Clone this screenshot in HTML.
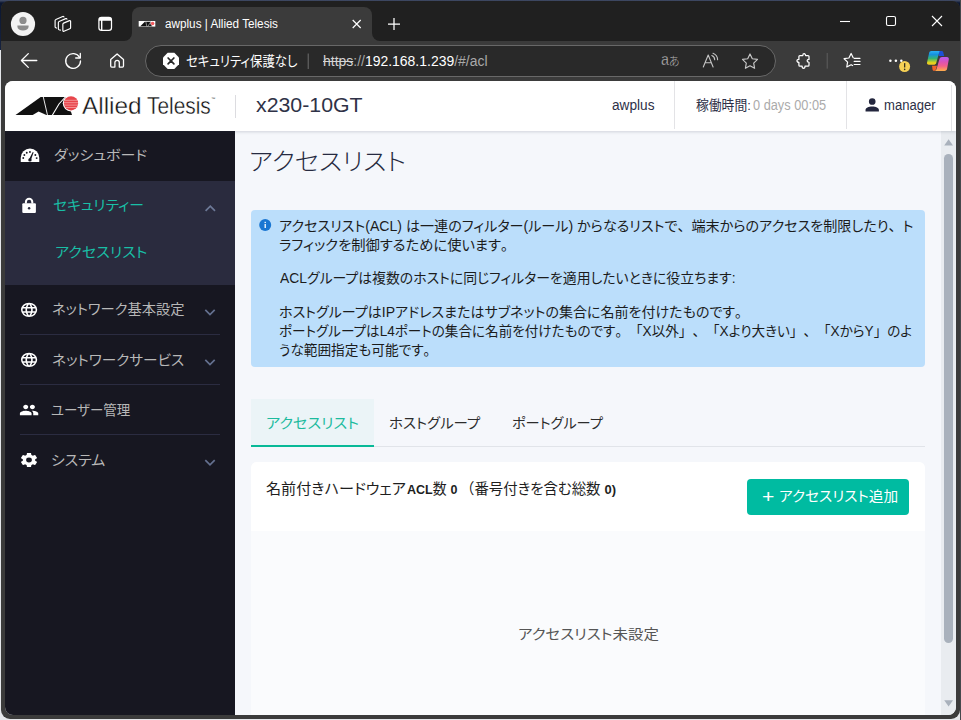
<!DOCTYPE html>
<html lang="ja">
<head>
<meta charset="utf-8">
<title>awplus | Allied Telesis</title>
<style>
*{box-sizing:border-box;margin:0;padding:0}
html,body{width:961px;height:720px;overflow:hidden}
body{background:#e4e6ea;font-family:"Liberation Sans","Noto Sans CJK JP",sans-serif;position:relative}
.abs{position:absolute}
.t{position:absolute;white-space:nowrap;transform-origin:0 50%;line-height:1;font-feature-settings:"palt"}
.fw{font-feature-settings:normal;text-spacing-trim:space-all}
#desk-top{left:0;top:0;width:961px;height:50px;background:linear-gradient(#46506a,#0b1630 3px,#16223e)}
#win{left:1px;top:1px;width:959px;height:717.5px;background:#3b3b3b;border-radius:8px 8px 9px 9px;overflow:hidden}
#titlebar{left:0;top:0;width:959px;height:40px;background:#202020}
#tab{left:131px;top:6px;width:240px;height:34px;background:#3b3b3b;border-radius:8px 8px 0 0}
.flare{width:8px;height:8px;top:32px;background:#3b3b3b}
.flare i{display:block;width:8px;height:8px;background:#202020}
#pill{left:144px;top:44px;width:630.5px;height:32px;border-radius:16px;background:#292929;border:1px solid #686868}
#content{left:4px;top:80px;width:951px;height:634px;border-radius:8px;overflow:hidden;background:#f5f7fb}
#header{left:0;top:0;width:951px;height:50px;background:#fff;box-shadow:0 1px 3px rgba(40,50,70,.18)}
#sidebar{left:0;top:50px;width:230px;height:584px;background:#171721}
#active{left:0;top:100px;width:230px;height:104px;background:#2a2b3e}
.sep{left:15px;width:200px;height:1px;background:#2b2c41}
#main{left:230px;top:50px;width:706px;height:584px}
#scroll{left:936px;top:50px;width:15px;height:584px;background:#e9ecf0}
#thumb{left:3px;top:23px;width:9px;height:489px;border-radius:4.5px;background:#a9b1bc}
#info{left:16px;top:79px;width:674px;height:156.6px;background:#bbdefb;border-radius:4px}
#tabsel{left:16px;top:268px;width:123px;height:47.8px;background:#ebf4f7;border-bottom:2.7px solid #08b997}
#tabline{left:139px;top:314.6px;width:551px;height:1px;background:#e1e4e9}
#card{left:16px;top:331px;width:674px;height:300px;background:#fafbfd;border-radius:6px 6px 0 0;overflow:hidden}
#cardhead{left:0;top:0;width:674px;height:69px;background:#fff}
#btn{left:496px;top:17px;width:162px;height:36px;background:#00bba1;border-radius:4px}
.hd{top:0;width:1px;height:48px;background:#e3e3e6}
#icons{left:0;top:0;width:961px;height:720px;pointer-events:none}
#texts{left:0;top:0;width:961px;height:720px}
</style>
</head>
<body>
<div class="abs" id="desk-top"></div>
<div class="abs" style="left:960px;top:0;width:1px;height:720px;background:#45484c"></div>
<div class="abs" id="win">
  <div class="abs" id="titlebar"></div>
  <div class="abs" id="tab"></div>
  <div class="abs flare" style="left:123px"><i style="border-radius:0 0 8px 0"></i></div>
  <div class="abs flare" style="left:371px"><i style="border-radius:0 0 0 8px"></i></div>
  <div class="abs" id="pill"></div>

  <div class="abs" id="content">
    <div class="abs" id="sidebar"></div>
    <div class="abs" id="active"></div>
    <div class="abs sep" style="top:253px"></div>
    <div class="abs sep" style="top:303px"></div>
    <div class="abs sep" style="top:353px"></div>
    <div class="abs" id="main">
      <div class="abs" id="info"></div>
      <div class="abs" id="tabsel"></div>
      <div class="abs" id="tabline"></div>
      <div class="abs" id="card">
        <div class="abs" id="cardhead"></div>
        <div class="abs" id="btn"></div>
      </div>
    </div>
    <div class="abs" id="scroll"><div class="abs" id="thumb"></div></div>
    <div class="abs" id="header">
      <div class="abs" style="left:230px;top:13.5px;width:1px;height:23px;background:#dcdce0"></div>
      <div class="abs hd" style="left:669px"></div>
      <div class="abs hd" style="left:841px"></div>
      <div class="abs hd" style="left:946px;top:4px;height:46px"></div>
    </div>
  </div>
</div>

<svg class="abs" id="icons" viewBox="0 0 961 720">
<!-- ===== title bar ===== -->
<g id="ic-profile">
  <circle cx="23" cy="24" r="12.1" fill="#f3f3f3"/>
  <circle cx="23" cy="20.4" r="3.6" fill="#8c8c8c"/>
  <path d="M17.4 25.4h11.2v1.3a5.6 3.9 0 0 1-11.2 0z" fill="#8c8c8c"/>
</g>
<g id="ic-workspaces" fill="none" stroke="#fff" stroke-width="1.15" stroke-linejoin="round" stroke-linecap="round">
  <path d="M63.6 23.1l5.9-2.5a.8.8 0 0 1 1.1.75v6.3a1.2 1.2 0 0 1-.75 1.1l-5.9 2.5a.8.8 0 0 1-1.1-.75v-6.3a1.2 1.2 0 0 1 .75-1.1z"/>
  <path d="M60.4 30.1l-1.3-.35a1.1 1.1 0 0 1-.75-1v-6.2a1.2 1.2 0 0 1 .75-1.1l6.6-2.8a.9.9 0 0 1 1.2.5"/>
  <path d="M56.4 28.1l-.6-.3a1.1 1.1 0 0 1-.7-1v-6.2a1.2 1.2 0 0 1 .75-1.1l6.9-3a.9.9 0 0 1 1.2.5"/>
</g>
<g id="ic-tabactions">
  <rect x="98.9" y="17.4" width="12.6" height="12.9" rx="2.6" fill="none" stroke="#fff" stroke-width="1.25"/>
  <path d="M98.9 20.8v-1a2.5 2.5 0 0 1 2.5-2.5h7.6a2.5 2.5 0 0 1 2.5 2.5v1z" fill="#fff"/>
  <rect x="101" y="20" width="1.4" height="10" fill="#fff"/>
</g>
<g id="ic-favicon">
  <rect x="138.700" y="21" width="16.600" height="5.600" fill="#fff"/>
  <path d="M140.300 26.200l4.500-4.400h6.200l1.200 4.400z" fill="#111"/>
  <path d="M145.800 21.600l1 4.800M151 21.600l-3.200 4.800" stroke="#fff" stroke-width=".5" fill="none"/>
  <circle cx="152.600" cy="23.500" r="2.200" fill="#fff"/>
  <circle cx="152.600" cy="23.500" r="1.800" fill="#f0585c"/>
</g>
<path id="ic-tabclose" d="M352.7 20l8 8M360.7 20l-8 8" stroke="#fff" stroke-width="1.2" fill="none"/>
<path id="ic-newtab" d="M388 24h12M394 18v12" stroke="#fff" stroke-width="1.25" fill="none"/>
<path id="ic-min" d="M840 21.5h10" stroke="#fff" stroke-width="1.1" fill="none"/>
<rect id="ic-max" x="886.5" y="16.5" width="9" height="9" rx="1.6" fill="none" stroke="#fff" stroke-width="1.1"/>
<path id="ic-close" d="M932 16l10 10M942 16l-10 10" stroke="#fff" stroke-width="1.1" fill="none"/>

<!-- ===== toolbar ===== -->
<path id="ic-back" d="M21.6 60.5h15.2M28.3 53.6l-6.9 6.9 6.9 6.9" fill="none" stroke="#fff" stroke-width="1.3" stroke-linecap="round" stroke-linejoin="round"/>
<g id="ic-refresh" fill="none" stroke="#fff" stroke-width="1.3" stroke-linecap="round" stroke-linejoin="round">
  <path d="M79.6 57.4a7.4 7.4 0 1 0 .9 3.5"/>
  <path d="M80.3 53.4v4.6h-4.6"/>
</g>
<g id="ic-home" fill="none" stroke="#fff" stroke-width="1.3" stroke-linejoin="round">
  <path d="M110.7 59.6l6.4-5.7 6.4 5.7v6.5a1 1 0 0 1-1 1h-3.2v-4.6a2.2 2.2 0 0 0-4.4 0v4.6h-3.2a1 1 0 0 1-1-1z"/>
</g>
<g id="ic-notsecure">
  <path d="M167.7 52.8h6.6l4.7 4.7v6.7l-4.7 4.7h-6.6l-4.7-4.7v-6.7z" fill="#fff"/>
  <path d="M168.100 58l5.800 5.800M173.900 58l-5.800 5.800" stroke="#262626" stroke-width="1.700" stroke-linecap="round"/>
</g>
<rect id="ic-pilldiv" x="307.7" y="53.5" width="1" height="15.5" fill="#6e6e6e"/>
<g id="ic-readaloud" fill="none" stroke="#c4c4c4" stroke-width="1.1" stroke-linecap="round" stroke-linejoin="round">
  <path d="M703.3 67l4.9-12 4.9 12M705.1 62.8h6.2"/>
  <path d="M711.8 55.6a4.6 4.6 0 0 1 2.9 4.2"/>
  <path d="M713 53.2a7.2 7.2 0 0 1 4.6 6.6"/>
</g>
<path id="ic-star" d="M750 53.9l2.3 4.8 5.2.7-3.8 3.7.9 5.2-4.6-2.5-4.6 2.5.9-5.2-3.8-3.7 5.2-.7z" fill="none" stroke="#c8c8c8" stroke-width="1.15" stroke-linejoin="round"/>
<path id="ic-puzzle" d="M799.900 55.600H802.800a1.400 1.850 0 0 1 2.800 0H808a1 1 0 0 1 1 1V59.400a1.900 1.450 0 0 0 0 2.900V65.200a1 1 0 0 1-1 1H805a1.450 2.100 0 0 1-2.900 0H799.900a1 1 0 0 1-1-1V62.300a2 1.450 0 0 1 0-2.900V56.600a1 1 0 0 1 1-1z" fill="none" stroke="#fff" stroke-width="1.250" stroke-linejoin="round"/>
<rect id="ic-tbdiv" x="826.7" y="53" width="1" height="15.6" fill="#5f5f5f"/>
<g id="ic-favlist" fill="none" stroke="#fff" stroke-width="1.2" stroke-linejoin="round" stroke-linecap="round">
  <path d="M853.2 57.8l-2.1-4.3-2.2 4.5-4.8.7 3.5 3.4-.85 4.9 4.35-2.3 1.5.8"/>
  <path d="M854.2 58.3h5.8M854.2 61.4h5.8M854.2 64.5h5.8"/>
</g>
<g id="ic-more" fill="#fff">
  <circle cx="890.4" cy="60.8" r="1.25"/><circle cx="895.9" cy="60.8" r="1.25"/><circle cx="901.3" cy="60.8" r="1.25"/>
</g>
<g id="ic-badge">
  <circle cx="904.6" cy="66.5" r="5.5" fill="#f6d155"/>
  <rect x="904" y="63" width="1.3" height="4.6" rx=".5" fill="#3a3320"/>
  <circle cx="904.65" cy="69.4" r=".8" fill="#3a3320"/>
</g>
<defs>
  <linearGradient id="cpA" x1="0" y1="0" x2="0" y2="1">
    <stop offset="0" stop-color="#2bb0f5"/><stop offset=".25" stop-color="#1590e0"/><stop offset=".55" stop-color="#35b373"/><stop offset=".85" stop-color="#e4d41a"/><stop offset="1" stop-color="#f5c526"/>
  </linearGradient>
  <linearGradient id="cpB" x1="0" y1="0" x2="0" y2="1">
    <stop offset="0" stop-color="#b65cf2"/><stop offset=".35" stop-color="#dc52b6"/><stop offset=".65" stop-color="#f4608a"/><stop offset="1" stop-color="#ffae4a"/>
  </linearGradient>
</defs>
<g id="ic-copilot">
  <path d="M938.900 51h2.600c.900 0 1.400.500 1.700 1.300l1 3.600h-5.500z" fill="#1c4fd6"/>
  <path d="M932 65.800h5l-1.300 4c-.300.800-.900 1.100-1.700 1.100-.800 0-1.300-.500-1.500-1.300z" fill="#f2602a"/>
  <path d="M931.300 51h8.300l-3.300 11.700c-.400 1.400-1.300 2-2.700 2h-4.700c-1.500 0-2.200-1-1.800-2.500l2-9.100c.300-1.400 1-2.100 2.200-2.100z" fill="url(#cpA)"/>
  <path d="M942 57h4.900c1.500 0 2.200 1 1.900 2.500l-1.700 9.200c-.300 1.400-1.100 2.200-2.500 2.200h-9.800c.9-.200 1.400-.800 1.700-1.800l3-10c.400-1.400 1.200-2.100 2.500-2.100z" fill="url(#cpB)"/>
</g>

<!-- ===== app header ===== -->
<g id="ic-logo">
  <path d="M15.500 115l25.200-18h25.700l5.600 18z" fill="#111"/>
  <path d="M43.200 96.500l4.300 18.700" stroke="#fff" stroke-width=".9" fill="none"/>
  <path d="M65.800 96.500l-6.800 7.500-6.700 11.200" stroke="#fff" stroke-width="1.100" fill="none"/>
  <path d="M32.300 115.200l6.300-3.600 8.300 3.600z" fill="#fff"/>
  <circle cx="71" cy="103.300" r="8.200" fill="#fff"/>
  <circle cx="71" cy="103.300" r="7.100" fill="#e8454b"/>
  <path d="M64.500 100.300h13M64 102.700h14M64 105.100h14M64.700 107.500h12.600" stroke="#f6a3a5" stroke-width=".8" fill="none"/>
</g>
<path id="ic-user" transform="translate(862.2 94.800) scale(.835)" d="M12,4A4,4 0 0,1 16,8A4,4 0 0,1 12,12A4,4 0 0,1 8,8A4,4 0 0,1 12,4M12,14C16.420,14 20,15.790 20,18V20H4V18C4,15.790 7.580,14 12,14Z" fill="#23263d"/>

<!-- ===== sidebar ===== -->
<g id="ic-dash" transform="translate(20.750 148.500)">
  <path d="M0 13.500v-4.250a9.250 9.250 0 0 1 18.500 0v4.250z" fill="#fff"/>
  <g fill="#171721">
    <circle cx="2.500" cy="9.500" r=".95"/><circle cx="3.600" cy="6.500" r=".95"/><circle cx="6" cy="4.200" r=".95"/><circle cx="9.200" cy="3.500" r=".95"/><circle cx="14.600" cy="6.500" r=".95"/><circle cx="15.900" cy="9.600" r=".95"/>
    <circle cx="9.200" cy="11.400" r="1.700"/>
    <path d="M8.300 10.800l3.700-7.400.9.300-2.700 7.900z"/>
  </g>
</g>
<g id="ic-lock">
  <rect x="22.300" y="203.300" width="13.600" height="9.800" rx="1" fill="#fff"/>
  <path d="M25.900 203.600v-1.600a3.200 3.200 0 0 1 6.400 0v1.600" fill="none" stroke="#fff" stroke-width="2"/>
  <circle cx="29.100" cy="208.200" r="1.250" fill="#2a2b3e"/>
</g>
<path id="ic-chevup" d="M205.600 210.800l4.700-4.700 4.700 4.700" fill="none" stroke="#6d7997" stroke-width="1.700"/>
<g fill="none" stroke="#64708f" stroke-width="1.700">
  <path d="M205.300 309.800l4.700 4.700 4.700-4.700"/>
  <path d="M205.300 359.900l4.700 4.700 4.700-4.700"/>
  <path d="M205.300 460.200l4.700 4.700 4.700-4.700"/>
</g>
<g id="ic-globes" fill="#fff">
  <path id="globe" transform="translate(19.380 301.270) scale(.810 .715)" d="M16.360,14C16.440,13.340 16.500,12.680 16.500,12C16.500,11.320 16.440,10.660 16.360,10H19.740C19.900,10.640 20,11.310 20,12C20,12.690 19.900,13.360 19.740,14M14.590,19.560C15.190,18.450 15.650,17.250 15.970,16H18.920C17.960,17.650 16.430,18.930 14.590,19.560M14.340,14H9.660C9.560,13.340 9.500,12.680 9.500,12C9.500,11.320 9.560,10.650 9.660,10H14.340C14.430,10.650 14.500,11.320 14.500,12C14.500,12.680 14.430,13.340 14.340,14M12,19.960C11.170,18.760 10.500,17.430 10.090,16H13.910C13.500,17.430 12.830,18.760 12,19.960M8,8H5.080C6.030,6.340 7.570,5.060 9.400,4.440C8.800,5.550 8.350,6.750 8,8M5.080,16H8C8.350,17.250 8.800,18.450 9.400,19.560C7.570,18.930 6.030,17.650 5.080,16M4.260,14C4.100,13.360 4,12.690 4,12C4,11.310 4.100,10.640 4.260,10H7.640C7.560,10.660 7.500,11.320 7.500,12C7.500,12.680 7.560,13.340 7.640,14M12,4.030C12.830,5.230 13.500,6.570 13.910,8H10.090C10.500,6.570 11.170,5.230 12,4.030M18.920,8H15.970C15.650,6.750 15.190,5.550 14.590,4.440C16.430,5.070 17.960,6.340 18.920,8M12,2C6.470,2 2,6.500 2,12A10,10 0 0,0 12,22A10,10 0 0,0 22,12A10,10 0 0,0 12,2Z"/>
  <path transform="translate(19.380 351.270) scale(.810 .715)" d="M16.360,14C16.440,13.340 16.500,12.680 16.500,12C16.500,11.320 16.440,10.660 16.360,10H19.740C19.900,10.640 20,11.310 20,12C20,12.690 19.900,13.360 19.740,14M14.590,19.560C15.190,18.450 15.650,17.250 15.970,16H18.920C17.960,17.650 16.430,18.930 14.590,19.560M14.340,14H9.660C9.560,13.340 9.500,12.680 9.500,12C9.500,11.320 9.560,10.650 9.660,10H14.340C14.430,10.650 14.500,11.320 14.500,12C14.500,12.680 14.430,13.340 14.340,14M12,19.960C11.170,18.760 10.500,17.430 10.090,16H13.910C13.500,17.430 12.830,18.760 12,19.960M8,8H5.080C6.030,6.340 7.570,5.060 9.400,4.440C8.800,5.550 8.350,6.750 8,8M5.080,16H8C8.350,17.250 8.800,18.450 9.400,19.560C7.570,18.930 6.030,17.650 5.080,16M4.260,14C4.100,13.360 4,12.690 4,12C4,11.310 4.100,10.640 4.260,10H7.640C7.560,10.660 7.500,11.320 7.500,12C7.500,12.680 7.560,13.340 7.640,14M12,4.030C12.830,5.230 13.500,6.570 13.910,8H10.090C10.500,6.570 11.170,5.230 12,4.030M18.920,8H15.970C15.650,6.750 15.190,5.550 14.590,4.440C16.430,5.070 17.960,6.340 18.920,8M12,2C6.470,2 2,6.500 2,12A10,10 0 0,0 12,22A10,10 0 0,0 22,12A10,10 0 0,0 12,2Z"/>
</g>
<path id="ic-users" transform="translate(19.070 401.100) scale(.834 .740)" d="M16 11c1.660 0 2.990-1.340 2.990-3S17.660 5 16 5c-1.660 0-3 1.340-3 3s1.340 3 3 3zm-8 0c1.660 0 2.990-1.340 2.990-3S9.660 5 8 5C6.340 5 5 6.340 5 8s1.340 3 3 3zm0 2c-2.330 0-7 1.170-7 3.500V19h14v-2.500c0-2.330-4.670-3.500-7-3.500zm8 0c-.290 0-.620.020-.970.050 1.160.840 1.970 1.970 1.970 3.450V19h6v-2.500c0-2.330-4.670-3.500-7-3.500z" fill="#fff"/>
<path id="ic-gear" transform="translate(19.100 451.480) scale(.825 .710)" d="M12,15.500A3.500,3.500 0 0,1 8.500,12A3.500,3.500 0 0,1 12,8.500A3.500,3.500 0 0,1 15.500,12A3.500,3.500 0 0,1 12,15.500M19.430,12.970C19.470,12.650 19.500,12.330 19.500,12C19.500,11.670 19.470,11.340 19.430,11L21.540,9.370C21.730,9.220 21.780,8.950 21.660,8.730L19.660,5.270C19.540,5.050 19.270,4.960 19.050,5.050L16.560,6.050C16.040,5.660 15.500,5.320 14.870,5.070L14.500,2.420C14.460,2.180 14.250,2 14,2H10C9.750,2 9.540,2.180 9.500,2.420L9.130,5.070C8.500,5.320 7.960,5.660 7.440,6.050L4.950,5.050C4.730,4.960 4.460,5.050 4.340,5.270L2.340,8.730C2.210,8.950 2.270,9.220 2.460,9.370L4.570,11C4.530,11.340 4.500,11.670 4.500,12C4.500,12.330 4.530,12.650 4.570,12.970L2.460,14.630C2.270,14.780 2.210,15.050 2.340,15.270L4.340,18.730C4.460,18.950 4.730,19.030 4.950,18.950L7.440,17.940C7.960,18.340 8.500,18.680 9.130,18.930L9.500,21.580C9.540,21.820 9.750,22 10,22H14C14.250,22 14.460,21.820 14.500,21.580L14.870,18.930C15.500,18.670 16.040,18.340 16.560,17.940L19.050,18.950C19.270,19.030 19.540,18.950 19.660,18.730L21.660,15.270C21.780,15.050 21.730,14.780 21.540,14.630L19.430,12.970Z" fill="#fff"/>

<!-- ===== main ===== -->
<g id="ic-info">
  <circle cx="265.200" cy="225" r="6" fill="#1976d2"/>
  <rect x="264.550" y="224" width="1.300" height="4" fill="#fff"/>
  <rect x="264.550" y="221.800" width="1.300" height="1.300" fill="#fff"/>
</g>
<path id="ic-sbup" d="M944.200 145.600l4.400-6.300 4.400 6.300z" fill="#a9b1bc"/>
<path id="ic-sbdown" d="M944.200 700.300l4.400 6.300 4.400-6.300z" fill="#a9b1bc"/>

</svg>

<div class="abs" id="texts">
<span class="t" id="tabtitle" style="left:165.00px;top:17.75px;font-size:12.5px;color:#ffffff;transform:scaleX(0.9379);">awplus | Allied Telesis</span>
<span class="t" id="sec" style="left:186.02px;top:54.00px;font-size:14px;color:#ffffff;transform:scaleX(0.8840);">セキュリティ保護なし</span>
<span class="t" id="url" style="left:323.00px;top:54.00px;font-size:14px;color:#ffffff;transform:scaleX(0.9970);"><span style="color:#d4d4d4;text-decoration:line-through">https</span><span style="color:#a4a4a4">://</span>192.168.1.239<span style="color:#a9a9a9">/#/acl</span></span>
<span class="t" id="trans1" style="left:661.15px;top:50.65px;font-size:17px;color:#b4b4b4;transform:scaleX(0.8337);-webkit-text-stroke:.3px #292929">a</span>
<span class="t" id="trans2" style="left:669.09px;top:55.50px;font-size:12px;color:#b4b4b4;transform:scaleX(0.9112);font-weight:300">あ</span>
<span class="t" id="brand1" style="left:81.98px;top:94.10px;font-size:24.5px;color:#111111;transform:scaleX(0.9956);-webkit-text-stroke:.35px #fff">Allied</span>
<span class="t" id="brand2" style="left:147.06px;top:94.10px;font-size:24.5px;color:#111111;transform:scaleX(0.8515);-webkit-text-stroke:.35px #fff">Telesis</span>
<span class="t" id="tm" style="left:210.74px;top:96.50px;font-size:4px;color:#333333;transform:scaleX(1.0494);">™</span>
<span class="t" id="model" style="left:256.00px;top:94.00px;font-size:21px;color:#2f3247;transform:scaleX(1.0143);">x230-10GT</span>
<span class="t" id="host" style="left:611.70px;top:97.70px;font-size:14px;color:#2d3047;transform:scaleX(0.9753);">awplus</span>
<span class="t" id="uplabel" style="left:695.55px;top:99.15px;font-size:13.5px;color:#2d3047;transform:scaleX(0.9483);">稼働時間:</span>
<span class="t" id="upval" style="left:753.00px;top:97.70px;font-size:14px;color:#ababab;transform:scaleX(0.9125);">0 days 00:05</span>
<span class="t" id="user" style="left:884.05px;top:97.60px;font-size:14px;color:#2d3047;transform:scaleX(0.9331);">manager</span>
<span class="t" id="n1" style="left:53.93px;top:148.00px;font-size:14px;color:#b8b8b8;transform:scaleX(1.0706);">ダッシュボード</span>
<span class="t" id="n2" style="left:53.00px;top:197.50px;font-size:14px;color:#19bfa6;transform:scaleX(1.0556);">セキュリティー</span>
<span class="t" id="n3" style="left:54.84px;top:245.00px;font-size:14px;color:#19bfa6;transform:scaleX(1.0784);">アクセスリスト</span>
<span class="t" id="n4" style="left:51.97px;top:302.00px;font-size:14px;color:#b8b8b8;transform:scaleX(1.0195);">ネットワーク基本設定</span>
<span class="t" id="n5" style="left:51.92px;top:352.50px;font-size:14px;color:#b8b8b8;transform:scaleX(1.0444);">ネットワークサービス</span>
<span class="t" id="n6" style="left:51.02px;top:403.00px;font-size:14px;color:#b8b8b8;transform:scaleX(0.9622);">ユーザー管理</span>
<span class="t" id="n7" style="left:50.87px;top:453.00px;font-size:14px;color:#b8b8b8;transform:scaleX(1.0633);">システム</span>
<span class="t" id="h1" style="left:248.86px;top:150.00px;font-size:24px;color:#262a40;transform:scaleX(1.0699);font-weight:300">アクセスリスト</span>
<span class="t" id="i1" style="left:278.99px;top:218.50px;font-size:14px;color:#1c1c1c;transform:scaleX(1.0064);">アクセスリスト(ACL) は一連のフィルター(ルール) からなるリストで<span class="fw">、</span>端末からのアクセスを制限したり<span class="fw">、</span>ト</span>
<span class="t" id="i2" style="left:278.98px;top:238.00px;font-size:14px;color:#1c1c1c;transform:scaleX(1.0203);">ラフィックを制御するために使います<span class="fw">。</span></span>
<span class="t" id="i3" style="left:280.00px;top:271.00px;font-size:14px;color:#1c1c1c;transform:scaleX(0.9913);">ACLグループは複数のホストに同じフィルターを適用したいときに役立ちます:</span>
<span class="t" id="i4" style="left:279.00px;top:305.00px;font-size:14px;color:#1c1c1c;transform:scaleX(1.0022);">ホストグループはIPアドレスまたはサブネットの集合に名前を付けたものです<span class="fw">。</span></span>
<span class="t" id="i5" style="left:279.03px;top:324.00px;font-size:14px;color:#1c1c1c;transform:scaleX(0.9706);">ポートグループはL4ポートの集合に名前を付けたものです<span class="fw">。「</span>X以外<span class="fw">」、「</span>Xより大きい<span class="fw">」、「</span>XからY<span class="fw">」</span>のよ</span>
<span class="t" id="i6" style="left:279.02px;top:343.00px;font-size:14px;color:#1c1c1c;transform:scaleX(0.9755);">うな範囲指定も可能です<span class="fw">。</span></span>
<span class="t" id="tb1" style="left:265.92px;top:416.00px;font-size:14px;color:#1dbb9e;transform:scaleX(1.0837);">アクセスリスト</span>
<span class="t" id="tb2" style="left:389.00px;top:416.00px;font-size:14px;color:#2c2c2c;transform:scaleX(1.0299);">ホストグループ</span>
<span class="t" id="tb3" style="left:511.97px;top:416.00px;font-size:14px;color:#2c2c2c;transform:scaleX(1.0135);">ポートグループ</span>
<span class="t" id="cnt" style="left:265.98px;top:480.50px;font-size:15px;color:#1e1e1e;transform:scaleX(1.0072);">名前付きハードウェア</span>
<span class="t" id="cnt2" style="left:406.81px;top:480.50px;font-size:15px;color:#1e1e1e;transform:scaleX(0.9259);"><b style="font-size:13.5px">ACL</b>数 <b style="font-size:13.5px">0</b></span>
<span class="t" id="cnt3" style="left:460.39px;top:480.50px;font-size:15px;color:#1e1e1e;transform:scaleX(0.9605);"><span class="fw">（</span>番号付きを含む総数 <b style="font-size:13.5px">0)</b></span>
<span class="t" id="plus" style="left:761.91px;top:488.10px;font-size:18px;color:#ffffff;transform:scaleX(1.1773);">+</span>
<span class="t" id="btnt" style="left:778.93px;top:489.00px;font-size:14px;color:#ffffff;transform:scaleX(1.0474);">アクセスリスト追加</span>
<span class="t" id="empty" style="left:517.90px;top:627.00px;font-size:14px;color:#555555;transform:scaleX(1.1032);">アクセスリスト未設定</span>
</div>
</body>
</html>
